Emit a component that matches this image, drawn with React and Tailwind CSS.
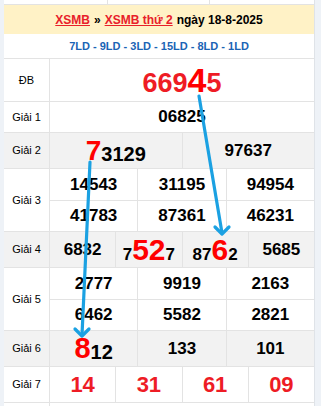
import React from "react";

const F = { fontFamily: '"Liberation Sans", Arial, sans-serif' };

function Row({ label, h, gray, children, labelCls = "text-[11px]" }) {
  return (
    <div className={`flex border-b border-[#e3e3e3] ${h} ${gray ? "bg-[#f2f2f2]" : "bg-white"}`}>
      <div className={`w-[46px] shrink-0 border-r border-[#e3e3e3] flex items-center justify-center text-black ${labelCls}`}>
        {label}
      </div>
      <div className="flex-1 flex flex-col">{children}</div>
    </div>
  );
}

function Cells({ items, cls = "" }) {
  return (
    <div className={`flex flex-1 ${cls}`}>
      {items.map((it, i) => (
        <div
          key={i}
          className={`flex-1 flex items-center justify-center font-bold text-[17px] text-black ${i > 0 ? "border-l border-[#e3e3e3]" : ""}`}
        >
          {it}
        </div>
      ))}
    </div>
  );
}

const R = "text-[#ff0000]";

export default function App() {
  return (
    <div className="relative w-[321px] h-[406px] overflow-hidden bg-[#eef2f7]" style={F}>
      <div className="ml-[4px] w-[311px] bg-white border-r border-[#dfe3e8]">
        <div className="flex h-[5px] border-b border-[#e3e3e3]">
          <div className="w-[104px] border-r border-[#e3e3e3]" />
          <div className="w-[102px] border-r border-[#e3e3e3]" />
          <div className="flex-1" />
        </div>
        <div className="h-[29px] bg-[#fff2c6] flex items-center justify-center text-[12px] font-bold text-black">
          <span className="text-[#e8202a] underline">XSMB</span>
          <span className="mx-[4px]">»</span>
          <span className="text-[#e8202a] underline">XSMB thứ 2</span>
          <span className="ml-[4px]">ngày 18-8-2025</span>
        </div>
        <div className="h-[25px] border-b border-[#e3e3e3] flex items-center justify-center text-[11px] font-bold text-[#1b64b5]">
          7LD - 9LD - 3LD - 15LD - 8LD - 1LD
        </div>
        <Row label="ĐB" h="h-[43px]">
          <div className="flex-1 flex items-center justify-center font-bold text-[#ee1c25] leading-none">
            <span className="text-[27px] pt-[6px]">669</span>
            <span className="text-[34px] text-[#ff0000]">4</span>
            <span className="text-[27px] pt-[6px]">5</span>
          </div>
        </Row>
        <Row label="Giải 1" h="h-[31px]">
          <Cells items={["06825"]} />
        </Row>
        <Row label="Giải 2" h="h-[36px]" gray>
          <Cells
            items={[
              <span className="flex items-end leading-none">
                <span className={`text-[28px] ${R}`}>7</span>
                <span className="text-[20px] pb-[1px]">3129</span>
              </span>,
              "97637",
            ]}
          />
        </Row>
        <Row label="Giải 3" h="h-[63px]">
          <Cells items={["14543", "31195", "94954"]} cls="border-b border-[#e3e3e3]" />
          <Cells items={["41783", "87361", "46231"]} />
        </Row>
        <Row label="Giải 4" h="h-[36px]" gray>
          <Cells
            items={[
              "6832",
              <span className="flex items-end leading-none">
                <span className="text-[17px] pb-[2px]">7</span>
                <span className={`text-[30px] ${R}`}>52</span>
                <span className="text-[17px] pb-[2px]">7</span>
              </span>,
              <span className="flex items-end leading-none">
                <span className="text-[17px] pb-[2px]">87</span>
                <span className={`text-[30px] ${R}`}>6</span>
                <span className="text-[17px] pb-[2px]">2</span>
              </span>,
              "5685",
            ]}
          />
        </Row>
        <Row label="Giải 5" h="h-[63px]">
          <Cells items={["2777", "9919", "2163"]} cls="border-b border-[#e3e3e3]" />
          <Cells items={["6462", "5582", "2821"]} />
        </Row>
        <Row label="Giải 6" h="h-[36px]" gray>
          <Cells
            items={[
              <span className="flex items-end leading-none">
                <span className={`text-[29px] ${R}`}>8</span>
                <span className="text-[20px] pb-[1px]">12</span>
              </span>,
              "133",
              "101",
            ]}
          />
        </Row>
        <Row label="Giải 7" h="h-[36px]">
          <div className="flex flex-1">
            {["14", "31", "61", "09"].map((n, i) => (
              <div
                key={i}
                className={`flex-1 flex items-center justify-center font-bold text-[22px] text-[#ee1c25] ${i > 0 ? "border-l border-[#e3e3e3]" : ""}`}
              >
                {n}
              </div>
            ))}
          </div>
        </Row>
        <div className="flex h-[10px]">
          <div className="w-[46px] border-r border-[#e3e3e3]" />
        </div>
      </div>
      <svg className="absolute top-0 left-0 pointer-events-none" width="321" height="406">
        <g stroke="#1ba1e2" strokeWidth="3.2" strokeLinecap="round" strokeLinejoin="round" fill="none">
          <line x1="199" y1="96" x2="222" y2="233" />
          <polyline points="215,227 222,234 229,227" />
          <line x1="90" y1="162" x2="82" y2="335" />
          <polyline points="75,329 82,336 89,329" />
        </g>
      </svg>
    </div>
  );
}
